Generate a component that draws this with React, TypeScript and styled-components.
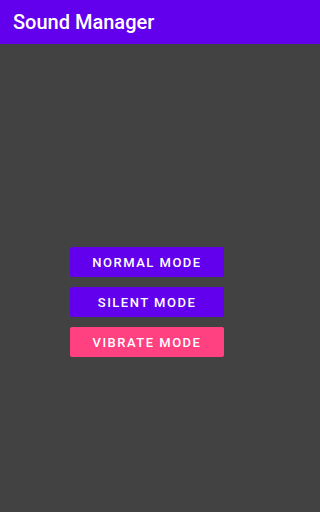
import React from 'react';
import styled, { createGlobalStyle } from 'styled-components';

const GlobalStyle = createGlobalStyle`
  html, body {
    margin: 0;
    padding: 0;
    background: #424242;
    font-family: Roboto, "Liberation Sans", sans-serif;
  }
`;

const modes = [
  { label: 'Normal Mode', accent: false },
  { label: 'Silent Mode', accent: false },
  { label: 'Vibrate Mode', accent: true },
];

function App() {
  return (
    <StyledScreen>
      <GlobalStyle />
      <StyledToolbar>
        <StyledTitle>Sound Manager</StyledTitle>
      </StyledToolbar>
      <StyledContent>
        {modes.map((mode) => (
          <StyledModeButton key={mode.label} type="button" $accent={mode.accent}>
            {mode.label}
          </StyledModeButton>
        ))}
      </StyledContent>
    </StyledScreen>
  );
}

const StyledScreen = styled.div`
  width: 100%;
  min-width: 288px;
  height: 512px;
  display: flex;
  flex-direction: column;
  background: #424242;
`;

const StyledToolbar = styled.header`
  height: 44px;
  display: flex;
  align-items: center;
  padding: 0 13px;
  background: #6200ee;
`;

const StyledTitle = styled.h1`
  margin: 0;
  font-size: 20px;
  font-weight: 500;
  color: #ffffff;
`;

const StyledContent = styled.main`
  width: 288px;
  display: flex;
  flex-direction: column;
  align-items: center;
  gap: 10px;
  padding: 203px 0 0 6px;
  box-sizing: border-box;
`;

const StyledModeButton = styled.button<{ $accent: boolean }>`
  width: 154px;
  height: 30px;
  border: none;
  border-radius: 2px;
  background: ${({ $accent }) => ($accent ? '#ff4081' : '#6200ee')};
  color: #ffffff;
  font-family: Roboto, "Liberation Sans", sans-serif;
  font-size: 13px;
  font-weight: 500;
  letter-spacing: 1.5px;
  text-transform: uppercase;
  padding: 0;
`;

export default App;
